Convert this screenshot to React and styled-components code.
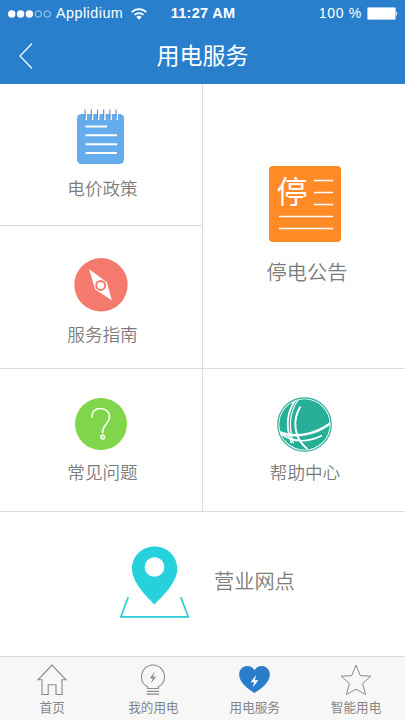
import React from "react";
import styled, { createGlobalStyle } from "styled-components";

const App = () => {
  return (
    <>
      <GlobalStyle />
      <Screen>
        <Header>
          <StatusBar>
            <Carrier>
              <SignalDots />
              <span>Applidium</span>
              <WifiIcon />
            </Carrier>
            <Clock>11:27 AM</Clock>
            <Power>
              <span>100 %</span>
              <BatteryIcon />
            </Power>
          </StatusBar>
          <TitleBar>
            <BackButton aria-label="返回">
              <svg width="14" height="26" viewBox="0 0 14 26">
                <path d="M13 .5 L1 13 L13 25.5" fill="none" stroke="#fff" strokeWidth="1.2" />
              </svg>
            </BackButton>
            <Title>用电服务</Title>
          </TitleBar>
        </Header>

        <ServiceGrid>
          <Service $top={25}>
            <NotepadIcon />
            <ServiceName $gap={12}>电价政策</ServiceName>
          </Service>
          <Service $top={82} $tall $last>
            <NoticeIcon>
              <NoticeMark>停</NoticeMark>
              <NoticeLines />
            </NoticeIcon>
            <ServiceName $gap={18} $large $indent={5}>
              停电公告
            </ServiceName>
          </Service>
          <Service $top={32}>
            <CompassIcon />
            <ServiceName $gap={10}>服务指南</ServiceName>
          </Service>
          <Service $top={29}>
            <QuestionIcon />
            <ServiceName $gap={10}>常见问题</ServiceName>
          </Service>
          <Service $top={28} $last>
            <GlobeIcon />
            <ServiceName $gap={8} $indent={1}>
              帮助中心
            </ServiceName>
          </Service>
        </ServiceGrid>

        <Branches>
          <PinIcon />
          <ServiceName $large>营业网点</ServiceName>
        </Branches>

        <TabBar>
          <Tab>
            <HomeIcon />
            <TabName>首页</TabName>
          </Tab>
          <Tab>
            <BulbIcon />
            <TabName>我的用电</TabName>
          </Tab>
          <Tab>
            <HeartIcon />
            <TabName>用电服务</TabName>
          </Tab>
          <Tab>
            <StarIcon />
            <TabName>智能用电</TabName>
          </Tab>
        </TabBar>
      </Screen>
    </>
  );
};

const SignalDots = () => (
  <svg width="43" height="8" viewBox="0 0 43 8">
    <g fill="#fff">
      <circle cx="3.7" cy="4" r="3.7" />
      <circle cx="12.6" cy="4" r="3.7" />
      <circle cx="21.4" cy="4" r="3.7" />
    </g>
    <g fill="none" stroke="#cfe4f7" strokeWidth=".8">
      <circle cx="30.3" cy="4" r="3.2" />
      <circle cx="39.2" cy="4" r="3.2" />
    </g>
  </svg>
);

const WifiIcon = () => (
  <svg width="16" height="12" viewBox="0 0 16 12">
    <g fill="none" stroke="#fff" strokeWidth="1.8">
      <path d="M.7 4.2 C4.8 .1 11.2 .1 15.3 4.2" />
      <path d="M3.5 6.9 C6 4.5 10 4.5 12.5 6.9" />
    </g>
    <path d="M5.3 8.9 Q8 6.8 10.7 8.9 L8 11.7Z" fill="#fff" />
  </svg>
);

const BatteryIcon = () => (
  <svg width="31" height="13" viewBox="0 0 31 13">
    <rect x=".5" y=".5" width="28" height="12" rx="1" fill="#fff" stroke="#a9cdf0" />
    <path d="M29 4 Q31.4 6.5 29 9Z" fill="#d9eafa" />
  </svg>
);

const NotepadIcon = () => (
  <svg width="48" height="55" viewBox="0 0 48 55">
    <rect x="0" y="5" width="47" height="50" rx="4.5" fill="#65acec" />
    {[8.5, 14.7, 20.9, 27.1, 33.3, 39.5].map((x) => (
      <g key={x}>
        <path d={`M${x + 0.7} 4.5 V11`} stroke="#fff" strokeWidth="1.6" />
        <path d={`M${x - 0.4} .5 V10`} stroke="#5b8fc4" strokeWidth="1.1" />
      </g>
    ))}
    <path d="M8.5 17.5 H30 M8.5 26.2 H40 M8.5 35.2 H40 M8.5 44 H40" stroke="#fff" strokeWidth="2" />
  </svg>
);

const NoticeLines = () => (
  <svg width="72" height="76" viewBox="0 0 72 76">
    <path
      d="M45 14.5 H64 M45 26.5 H64 M45 38.5 H64 M10 50.5 H64 M10 62.5 H64"
      stroke="#fff"
      strokeWidth="1.7"
    />
  </svg>
);

const CompassIcon = () => (
  <svg width="54" height="54" viewBox="0 0 54 54">
    <circle cx="27" cy="26.8" r="26.7" fill="#f47a6e" />
    <path d="M15.2 11.3 L32.8 24.2 L37.8 42.2 L21.2 31.4Z" fill="#fff" />
    <circle cx="26.7" cy="27.4" r="4.5" fill="#fff" stroke="#f47a6e" strokeWidth="2" />
  </svg>
);

const QuestionIcon = () => (
  <svg width="52" height="52" viewBox="0 0 52 52">
    <circle cx="26" cy="26" r="26" fill="#80d64a" />
    <path
      d="M16.8 19.5 C17 13.5 20.5 10.5 25.5 10.5 C31 10.5 34.5 14 34.5 18.5 C34.5 26.5 27.8 25 27.5 35.5"
      fill="none"
      stroke="#fff"
      strokeWidth="1.7"
    />
    <circle cx="27.7" cy="39" r="1.8" fill="none" stroke="#fff" strokeWidth="1.6" />
  </svg>
);

const GlobeIcon = () => (
  <svg width="55" height="55" viewBox="0 0 55 55">
    <circle cx="27.5" cy="27.5" r="25.2" fill="#26af96" />
    <g fill="none" stroke="#fff">
      <path d="M19 2.5 C9.5 15 9 31 14.5 46" strokeWidth="1.8" />
      <path d="M22 2 C12.5 14 11.5 30 16.5 46.5" strokeWidth="1.2" />
      <path d="M23.5 9.5 C15.5 22 16 41 30.5 52" strokeWidth="2" />
      <path d="M3 35.5 C18 41 38 38 53 26.5" strokeWidth="2.4" />
      <path d="M3 36 C15 45 30 46 45 38.5" strokeWidth="1.6" />
    </g>
    <circle cx="27.5" cy="27.5" r="26.7" fill="none" stroke="#26af96" strokeWidth="1.2" />
  </svg>
);

const PinIcon = () => (
  <svg width="70" height="72" viewBox="0 0 70 72">
    <path
      d="M34.5 58.5 C27 51 12 36.5 12 22.8 C12 10 22 .5 34.6 .5 C47.2 .5 57.3 10 57.3 22.8 C57.3 36.5 42 51 34.5 58.5Z"
      fill="#27d1db"
    />
    <circle cx="34.5" cy="21" r="9.8" fill="#fff" />
    <path d="M8.2 51.3 L.9 70.8 H68.3 L60.8 51.3" fill="none" stroke="#27cbd2" strokeWidth="1.7" />
  </svg>
);

const HomeIcon = () => (
  <svg width="30" height="32" viewBox="0 0 30 32">
    <path
      d="M15 1 L1 15.8 H5 V30.5 H11.2 V20.8 H19 V30.5 H25 V15.8 H29Z"
      fill="none"
      stroke="#8b8b8b"
      strokeWidth="1.1"
    />
  </svg>
);

const BulbIcon = () => (
  <svg width="26" height="32" viewBox="0 0 26 32">
    <path
      d="M7.6 24.5 V22.8 C3.8 20.8 1.5 17.3 1.5 12.9 A11.5 11.9 0 0 1 24.5 12.9 C24.5 17.3 22.2 20.8 18.4 22.8 V24.5Z"
      fill="none"
      stroke="#8b8b8b"
      strokeWidth="1.1"
    />
    <path d="M6.8 27.4 H19.2 M6.8 30.2 H19.2" stroke="#8b8b8b" strokeWidth="1.2" />
    <path d="M14.8 7.5 L9.8 14.2 H12.8 L11 19.3 L16.2 12.7 H13Z" fill="#8b8b8b" />
  </svg>
);

const HeartIcon = () => (
  <svg width="31" height="32" viewBox="0 0 31 32">
    <path
      d="M15.5 29.2 C12.5 26.5 .2 20.5 .2 10.3 C.2 5.8 3.6 2 8 2 C11.5 2 14 3.5 15.5 6.3 C17 3.5 19.5 2 23 2 C27.4 2 30.8 5.8 30.8 10.3 C30.8 20.5 18.5 26.5 15.5 29.2Z"
      fill="#2a7dca"
    />
    <path d="M17.2 10.8 L11.7 18.3 H15.2 L13.6 23.5 L19.4 16.2 H15.8Z" fill="#fff" />
  </svg>
);

const StarIcon = () => (
  <svg width="32" height="32" viewBox="0 0 32 32">
    <path
      d="M16 1.2 L20.3 11.6 L30.8 12.2 L22.6 19.6 L25.6 30.5 L16 25.2 L6.4 30.5 L9.4 19.6 L1.2 12.2 L11.7 11.6Z"
      fill="none"
      stroke="#8b8b8b"
      strokeWidth="1"
    />
  </svg>
);

const GlobalStyle = createGlobalStyle`
  * {
    box-sizing: border-box;
  }
  body {
    margin: 0;
    font-family: "Liberation Sans", "Noto Sans CJK SC", sans-serif;
  }
  svg {
    display: block;
    flex: none;
  }
`;

const Screen = styled.main`
  width: 405px;
  height: 720px;
  display: flex;
  flex-direction: column;
  overflow: hidden;
  background: #fff;
`;

const Header = styled.header`
  height: 84px;
  flex: none;
  background: #2a7fcd;
  border-bottom: 1px solid #3384c8;
  color: #fff;
`;

const StatusBar = styled.div`
  height: 27px;
  padding: 0 7px 0 8px;
  display: grid;
  grid-template-columns: 1fr auto 1fr;
  align-items: center;
  font-size: 14px;
  line-height: 27px;
`;

const Carrier = styled.div`
  display: flex;
  align-items: center;
  gap: 5px;
  span {
    width: 70px;
    font-size: 14.3px;
    letter-spacing: 0.5px;
  }
`;

const Clock = styled.div`
  font-size: 14.5px;
  font-weight: 700;
  letter-spacing: 0.3px;
`;

const Power = styled.div`
  display: flex;
  align-items: center;
  justify-content: flex-end;
  gap: 5px;
  letter-spacing: 0.7px;
`;

const TitleBar = styled.div`
  height: 57px;
  display: grid;
  grid-template-columns: 60px 1fr 60px;
  align-items: center;
`;

const BackButton = styled.button`
  padding: 0 0 0 19px;
  border: none;
  background: none;
  cursor: pointer;
`;

const Title = styled.h1`
  margin: 0;
  padding-top: 2px;
  font-size: 23px;
  font-weight: 400;
  line-height: 55px;
  text-align: center;
`;

const ServiceGrid = styled.section`
  display: grid;
  grid-template-columns: 203px 202px;
  grid-template-rows: 142px 143px 143px;
`;

const Service = styled.div`
  grid-row: ${({ $tall }) => ($tall ? "span 2" : "auto")};
  padding-top: ${({ $top }) => $top}px;
  padding-left: ${({ $last }) => ($last ? 1 : 0)}px;
  display: flex;
  flex-direction: column;
  align-items: center;
  border-right: ${({ $last }) => ($last ? "none" : "1px solid #dcdcdc")};
  border-bottom: 1px solid #dcdcdc;
`;

const ServiceName = styled.span`
  margin-top: ${({ $gap = 0 }) => $gap}px;
  padding-left: ${({ $indent = 3 }) => $indent}px;
  color: #7c7c7c;
  font-size: ${({ $large }) => ($large ? "20.2px" : "17.6px")};
  font-weight: 350;
  line-height: 26px;
`;

const NoticeIcon = styled.div`
  width: 72px;
  height: 76px;
  display: grid;
  border-radius: 4px;
  background: #ff8a26;
  > * {
    grid-area: 1 / 1;
  }
`;

const NoticeMark = styled.span`
  padding: 10px 0 0 8px;
  color: #fff;
  font-size: 31px;
  line-height: 34px;
`;

const Branches = styled.section`
  flex: 1;
  padding: 0 0 5px 120px;
  display: flex;
  align-items: center;
  gap: 21px;
`;

const TabBar = styled.nav`
  height: 64px;
  flex: none;
  padding: 7px 0 0 1px;
  display: grid;
  grid-template-columns: repeat(4, 101.3px);
  border-top: 1px solid #d9d9d9;
  background: #f7f7f7;
`;

const Tab = styled.a`
  display: flex;
  flex-direction: column;
  align-items: center;
`;

const TabName = styled.span`
  margin-top: 3px;
  padding-left: 1px;
  color: #858585;
  font-size: 12.6px;
  line-height: 18px;
`;

export default App;
